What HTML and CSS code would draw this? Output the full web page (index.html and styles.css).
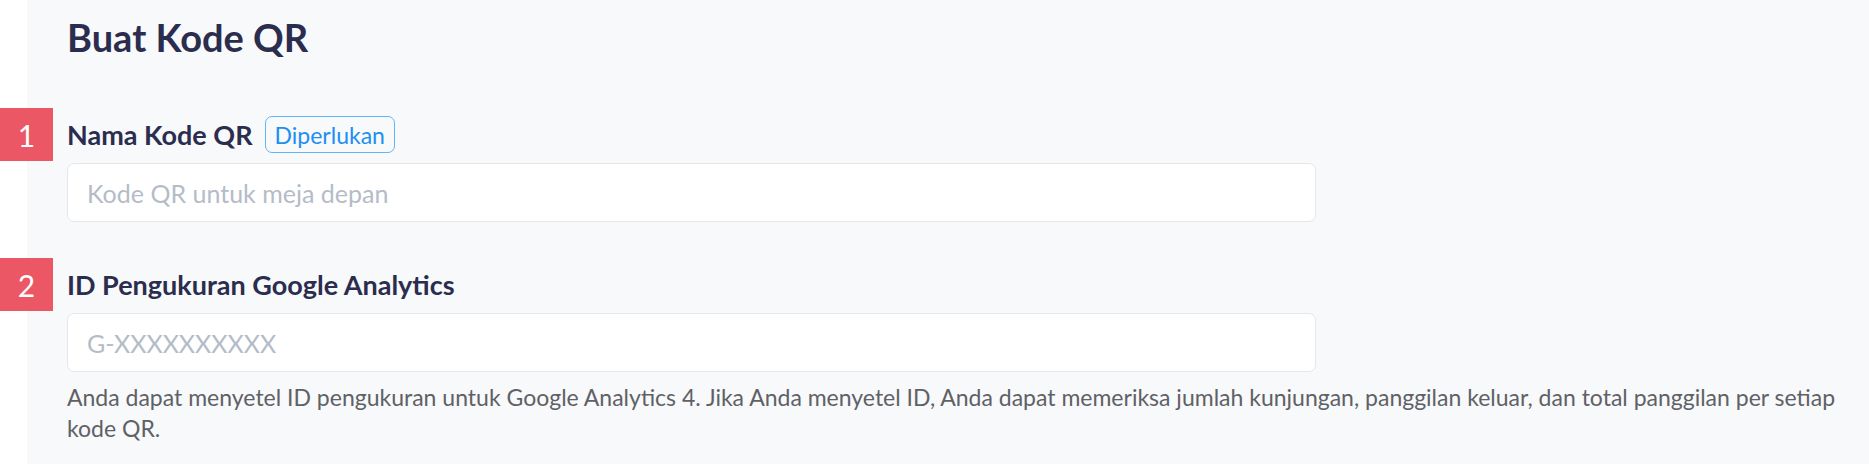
FILE: index.html
```html
<!DOCTYPE html>
<html lang="id">
  <head>
    <meta charset="UTF-8" />
    <meta name="viewport" content="width=device-width, initial-scale=1.0" />
    <title>Buat Kode QR</title>
    <link rel="stylesheet" href="styles.css">
  </head>
  <body>
    <main class="panel">
      <h1 class="title">Buat Kode QR</h1>
      <div class="field">
        <span class="step">1</span>
        <div class="label-row">
          <label for="qr-name" class="label">Nama Kode QR</label>
          <span class="required">Diperlukan</span>
        </div>
        <input id="qr-name" class="input" type="text" placeholder="Kode QR untuk meja depan" />
      </div>
      <div class="field">
        <span class="step">2</span>
        <div class="label-row">
          <label for="ga-id" class="label">ID Pengukuran Google Analytics</label>
        </div>
        <input id="ga-id" class="input" type="text" placeholder="G-XXXXXXXXXX" />
        <p class="hint">Anda dapat menyetel ID pengukuran untuk Google Analytics 4. Jika Anda menyetel ID, Anda dapat memeriksa jumlah kunjungan, panggilan keluar, dan total panggilan per setiap kode QR.</p>
      </div>
    </main>
  </body>
</html>
```

FILE: styles.css
```css
* {
  margin: 0;
  padding: 0;
  box-sizing: border-box;
}
body {
  background-color: #ffffff;
  font-family: Lato, "Noto Sans", sans-serif;
  color: #2b2d4e;
}
.panel {
  margin-left: 27px;
  min-height: 100vh;
  background-color: #f8f9fb;
  padding: 13px 24px 0 40px;
}
.title {
  font-size: 38px;
  line-height: 48px;
  font-weight: 700;
  color: #2b2d4e;
}
.field {
  position: relative;
  margin-top: 55px;
}
.field + .field {
  margin-top: 44px;
}
.step {
  position: absolute;
  left: -67px;
  top: -8px;
  width: 53px;
  height: 53px;
  display: flex;
  justify-content: center;
  align-items: center;
  background-color: #ec5766;
  color: #ffffff;
  font-size: 30px;
  font-weight: 400;
}
.label-row {
  height: 37px;
  display: flex;
  align-items: center;
  gap: 12px;
}
.label {
  font-size: 27px;
  font-weight: 700;
}
.required {
  height: 37px;
  padding: 0 9px;
  display: flex;
  align-items: center;
  border: 1px solid #64b5f6;
  border-radius: 7px;
  color: #1e8ff0;
  font-size: 23px;
}
.input {
  display: block;
  width: 1249px;
  height: 59px;
  margin-top: 10px;
  padding: 0 19px;
  border: 1px solid #e5e7eb;
  border-radius: 7px;
  background-color: #ffffff;
  font-family: inherit;
  font-size: 25px;
  color: #2b2d4e;
  outline: none;
}
.input::placeholder {
  color: #b4bcc7;
}
.hint {
  margin-top: 10px;
  font-size: 23px;
  line-height: 31px;
  color: #5f6166;
}
```
